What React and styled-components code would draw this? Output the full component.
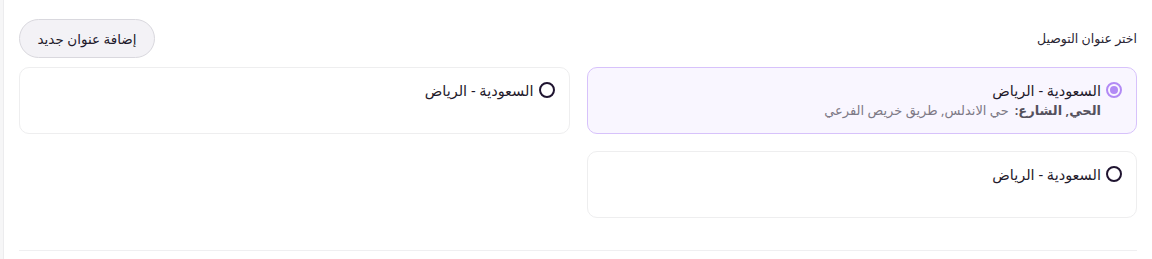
import React, { useState } from 'react';
import styled, { createGlobalStyle } from 'styled-components';

const GlobalStyle = createGlobalStyle`
  html, body {
    margin: 0;
    padding: 0;
    background: #f6f6f7;
  }
  body {
    font-family: "Noto Sans", "DejaVu Sans", sans-serif;
    color: #1f1a2b;
  }
`;

const Page = styled.div`
  margin-left: 3px;
  min-height: 259px;
  background: #ffffff;
  border-left: 1px solid #ececee;
  padding: 19px 15px 0 15px;
  box-sizing: border-box;
  direction: rtl;
`;

const TopBar = styled.div`
  display: flex;
  align-items: center;
  justify-content: space-between;
  height: 39px;
  margin-bottom: 9px;
`;

const Label = styled.span`
  font-size: 12.5px;
  color: #2a2533;
`;

const AddButton = styled.button`
  height: 39px;
  width: 136px;
  border-radius: 999px;
  border: 1px solid #d9d8de;
  background: #f3f2f6;
  font-family: inherit;
  font-size: 13.5px;
  color: #1f1a2b;
  cursor: pointer;
`;

const Grid = styled.div`
  display: grid;
  grid-template-columns: 1fr 1fr;
  column-gap: 17px;
  row-gap: 17px;
`;

const Card = styled.label`
  display: block;
  min-height: 67px;
  box-sizing: border-box;
  padding: 12px 14px;
  border-radius: 10px;
  border: 1px solid ${p => (p.$active ? '#d7c2fb' : '#eeeeef')};
  background: ${p => (p.$active ? '#f9f6ff' : '#ffffff')};
  cursor: pointer;
`;

const TitleRow = styled.div`
  display: flex;
  align-items: center;
  gap: 5px;
  height: 20px;
  font-size: 14.5px;
  color: #1f1a2b;
`;

const Radio = styled.span`
  width: 12px;
  height: 12px;
  border-radius: 50%;
  border: 2px solid ${p => (p.$active ? '#b28af5' : '#1f1430')};
  display: flex;
  align-items: center;
  justify-content: center;
  flex-shrink: 0;
  &::after {
    content: '';
    width: 8px;
    height: 8px;
    border-radius: 50%;
    background: ${p => (p.$active ? '#b28af5' : 'transparent')};
  }
`;

const Details = styled.div`
  height: 21px;
  line-height: 21px;
  font-size: 13px;
  color: #7d7986;
  padding-right: 21px;
  b {
    color: #55515d;
    font-weight: 600;
    margin-left: 6px;
  }
`;

const Divider = styled.hr`
  border: none;
  border-top: 1px solid #efeff1;
  margin: 32px 0 0 0;
`;

const addresses = [
  { id: 1, title: 'السعودية - الرياض', details: 'حي الاندلس, طريق خريص الفرعي' },
  { id: 2, title: 'السعودية - الرياض' },
  { id: 3, title: 'السعودية - الرياض' },
];

export default function App() {
  const [selected, setSelected] = useState(1);

  return (
    <>
      <GlobalStyle />
      <Page>
        <TopBar>
          <Label>اختر عنوان التوصيل</Label>
          <AddButton>إضافة عنوان جديد</AddButton>
        </TopBar>
        <Grid>
          {addresses.map(a => {
            const active = a.id === selected;
            return (
              <Card key={a.id} $active={active} onClick={() => setSelected(a.id)}>
                <TitleRow>
                  <Radio $active={active} />
                  {a.title}
                </TitleRow>
                {active && a.details && (
                  <Details>
                    <b>الحي, الشارع:</b>
                    {a.details}
                  </Details>
                )}
              </Card>
            );
          })}
        </Grid>
        <Divider />
      </Page>
    </>
  );
}
